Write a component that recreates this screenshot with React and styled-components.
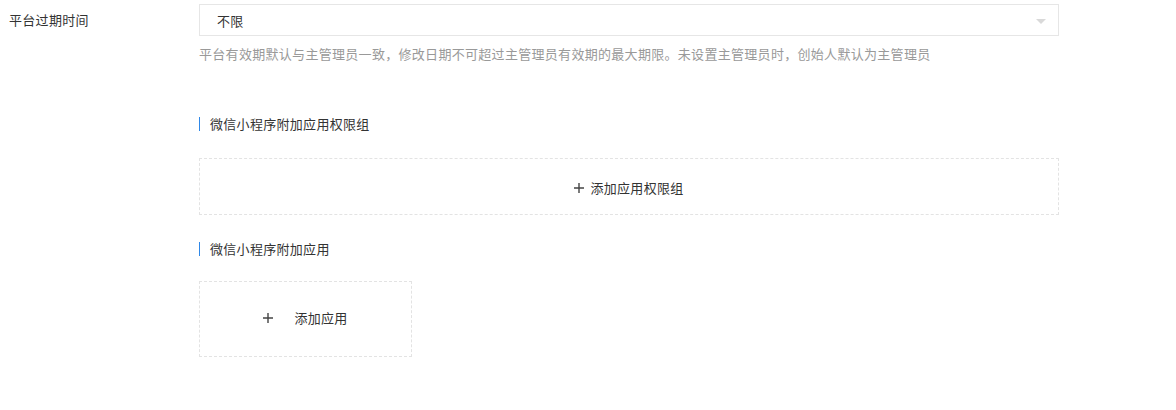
import React from "react";
import styled, { createGlobalStyle } from "styled-components";

const Global = createGlobalStyle`
  html, body { margin: 0; padding: 0; background: #fff; }
  body {
    font-family: "Noto Sans CJK SC", "Noto Sans", "Liberation Sans", sans-serif;
    font-size: 13px;
    letter-spacing: 0.3px;
    color: #333;
  }
`;

const Page = styled.div`
  width: 1176px;
  height: 410px;
  padding: 4px 0 0 9px;
  box-sizing: border-box;
`;

const FormRow = styled.div`
  display: grid;
  grid-template-columns: 190px 860px;
  align-items: start;
`;

const Label = styled.div`
  height: 32px;
  line-height: 32px;
  color: #333;
  font-size: 13px;
`;

const Field = styled.div`
  display: flex;
  flex-direction: column;
`;

const Select = styled.div`
  height: 32px;
  box-sizing: border-box;
  border: 1px solid #e6e6e6;
  display: flex;
  align-items: center;
  justify-content: space-between;
  padding: 0 12px 0 17px;
  color: #333;
`;

const Arrow = styled.span`
  width: 0;
  height: 0;
  border-left: 5px solid transparent;
  border-right: 5px solid transparent;
  border-top: 5px solid #d9d9d9;
  margin-top: 2px;
`;

const Hint = styled.div`
  margin-top: 9px;
  line-height: 18px;
  color: #999;
  font-size: 13px;
`;

const SectionTitle = styled.div`
  margin-top: ${(p) => p.$top}px;
  line-height: 18px;
  color: #333;
  display: flex;
  align-items: center;
  gap: 10px;
  &::before {
    content: "";
    width: 1px;
    height: 14px;
    background: #2f88e8;
  }
`;

const AddBox = styled.div`
  margin-top: ${(p) => p.$top}px;
  width: ${(p) => p.$width};
  height: ${(p) => p.$height}px;
  box-sizing: border-box;
  border: 1px dashed #e3e3e3;
  display: flex;
  align-items: center;
  justify-content: center;
  gap: ${(p) => p.$gap}px;
  color: #333;
  cursor: pointer;
  padding-top: ${(p) => p.$padTop || 0}px;
  padding-bottom: ${(p) => p.$padBottom || 0}px;
`;

const Plus = () => (
  <svg width="10" height="10" viewBox="0 0 10 10">
    <path d="M5 0v10M0 5h10" stroke="#444" strokeWidth="1.4" />
  </svg>
);

export default function App() {
  return (
    <>
      <Global />
      <Page>
        <FormRow>
          <Label>平台过期时间</Label>
          <Field>
            <Select>
              <span>不限</span>
              <Arrow />
            </Select>
            <Hint>
              平台有效期默认与主管理员一致，修改日期不可超过主管理员有效期的最大期限。未设置主管理员时，创始人默认为主管理员
            </Hint>
            <SectionTitle $top={52}>微信小程序附加应用权限组</SectionTitle>
            <AddBox $top={25} $width="100%" $height={57} $gap={6} $padTop={2}>
              <Plus />
              <span>添加应用权限组</span>
            </AddBox>
            <SectionTitle $top={25}>微信小程序附加应用</SectionTitle>
            <AddBox $top={23} $width="213px" $height={76} $gap={21} $padBottom={3}>
              <Plus />
              <span>添加应用</span>
            </AddBox>
          </Field>
        </FormRow>
      </Page>
    </>
  );
}
